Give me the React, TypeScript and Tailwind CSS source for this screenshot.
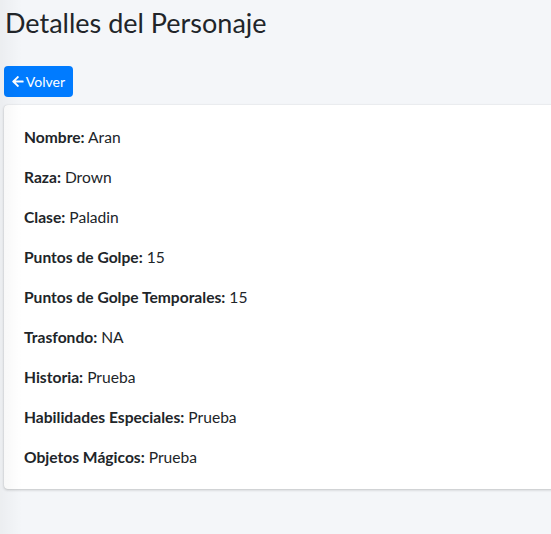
import React from "react";
import { FaArrowLeft } from "react-icons/fa";

const rows: [string, string][] = [
  ["Nombre:", "Aran"],
  ["Raza:", "Drown"],
  ["Clase:", "Paladin"],
  ["Puntos de Golpe:", "15"],
  ["Puntos de Golpe Temporales:", "15"],
  ["Trasfondo:", "NA"],
  ["Historia:", "Prueba"],
  ["Habilidades Especiales:", "Prueba"],
  ["Objetos Mágicos:", "Prueba"],
];

export default function App() {
  return (
    <div
      className="relative w-[551px] h-[534px] overflow-hidden bg-[#f4f6f9] text-[#212529]"
      style={{ fontFamily: "Lato, 'Liberation Sans', sans-serif" }}
    >
      <div className="pointer-events-none absolute left-0 top-0 h-full w-[22px] bg-gradient-to-r from-[rgba(0,0,0,0.035)] to-transparent z-10" />
      <div className="pl-[4px]">
        <div className="h-[66px] pt-[7px] pl-[1px]">
          <h1 className="text-[27px] leading-[32px] font-normal">Detalles del Personaje</h1>
        </div>
        <button className="flex h-[31px] w-[69px] items-center gap-[2px] rounded-[4px] bg-[#007bff] px-[8px] text-[14px] text-white">
          <FaArrowLeft className="h-[13px] w-[13px]" />
          <span>Volver</span>
        </button>
        <div className="mt-[8px] w-[700px] rounded-[4px] bg-white p-[20px] shadow-[0_0_1px_rgba(0,0,0,0.125),0_1px_3px_rgba(0,0,0,0.2)]">
          {rows.map(([k, v], i) => (
            <p
              key={k}
              className={`text-[15.6px] leading-[24px] ${i === rows.length - 1 ? "" : "mb-[16px]"}`}
            >
              <strong className="font-bold">{k}</strong> {v}
            </p>
          ))}
        </div>
      </div>
    </div>
  );
}
